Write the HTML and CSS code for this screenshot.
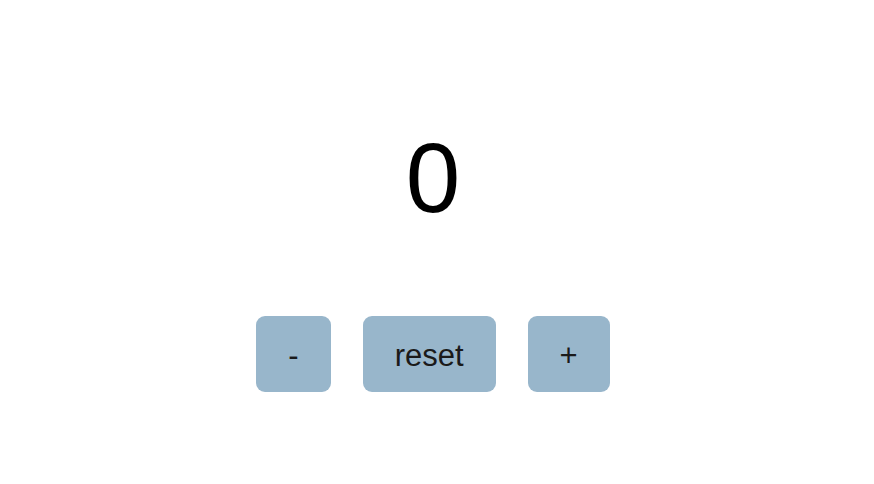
FILE: index.html
```html
<!DOCTYPE html>
<html>
<head>
<meta charset="utf-8">
<link rel="stylesheet" href="styles.css">
</head>
<body>
<main class="app">
  <div class="count">0</div>
  <div class="controls">
    <button class="btn">-</button>
    <button class="btn">reset</button>
    <button class="btn">+</button>
  </div>
</main>
</body>
</html>
```
FILE: styles.css
```css
html, body {
  margin: 0;
  padding: 0;
  background: #ffffff;
}
body {
  font-family: "Liberation Sans", Arial, sans-serif;
}
.app {
  display: flex;
  flex-direction: column;
  align-items: center;
  padding: 129px 8px 0 0;
  gap: 89px;
}
.count {
  font-size: 98px;
  line-height: 98px;
  color: #000000;
}
.controls {
  display: flex;
  gap: 32px;
}
.btn {
  font-family: "Liberation Sans", Arial, sans-serif;
  font-size: 31px;
  line-height: 36px;
  padding: 22px 32px 18px;
  border: none;
  border-radius: 9px;
  background: #98b6cb;
  color: #1a1a1a;
}
```
